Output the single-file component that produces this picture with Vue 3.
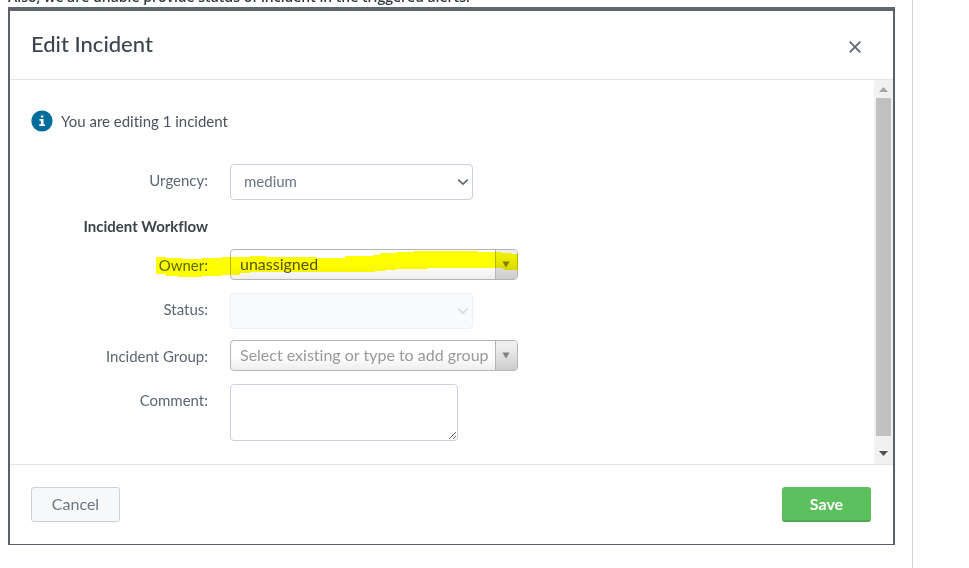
<script setup>
import { ref } from 'vue'

const urgency = ref('medium')
const owner = ref('unassigned')
const status = ref('')
const group = ref('')
const comment = ref('')
</script>

<template>
  <div class="page">
    <main class="post">
      <p class="post-text">Also, we are unable provide status of incident in the triggered alerts.</p>

      <section class="modal" role="dialog" aria-labelledby="modal-title">
        <header class="modal-header">
          <h1 id="modal-title">Edit Incident</h1>
          <button class="close" type="button" aria-label="Close">
            <svg width="12" height="12" viewBox="0 0 12 12">
              <path d="M0.7 0.7 L11.3 11.3 M11.3 0.7 L0.7 11.3" fill="none" stroke="#5c6773" stroke-width="1.8" />
            </svg>
          </button>
        </header>

        <div class="modal-body">
          <form class="content" @submit.prevent>
            <div class="notice">
              <svg width="22" height="22" viewBox="0 0 22 22" aria-hidden="true">
                <circle cx="11" cy="11" r="10.6" fill="#006d9c" />
                <path d="M9.9 5.4h2.5v2.2H9.9z M8.5 9h4v5.2h1.3v1.7H8.3v-1.7h1.6v-3.5H8.5z" fill="#fff" />
              </svg>
              <span>You are editing 1 incident</span>
            </div>

            <div class="row">
              <label for="urgency">Urgency:</label>
              <div class="select">
                <select id="urgency" v-model="urgency">
                  <option>medium</option>
                </select>
                <svg width="12" height="8" viewBox="0 0 12 8" aria-hidden="true">
                  <path d="M1.3 1.6 L6 6.1 L10.7 1.6" fill="none" stroke="#5c6773" stroke-width="1.6" />
                </svg>
              </div>
            </div>

            <div class="row heading">
              <h2>Incident Workflow</h2>
            </div>

            <div class="row">
              <label for="owner">Owner:</label>
              <div class="combo">
                <input id="owner" v-model="owner" type="text" />
                <button type="button" aria-label="Show owners">
                  <svg width="8" height="7" viewBox="0 0 8 7"><path d="M0.4 0.5h7.2L4 6.6z" fill="#808080" /></svg>
                </button>
              </div>
              <svg class="marker" width="362" height="28" viewBox="0 0 362 28" aria-hidden="true">
                <path
                  d="M0 7H10V8H26V9H46V8H66V7H94V6H110V7H160V8H189V6H217V5H224V3H240V2H258V1H322V2H346V3H356V4H362V20H348V19H346V18H272V19H240V20H229V21H219V22H94V23H84V25H66V26H46V27H22V26H10V24H0Z"
                  fill="#ffff00"
                />
              </svg>
            </div>

            <div class="row status">
              <label for="status">Status:</label>
              <div class="select disabled">
                <select id="status" v-model="status" disabled></select>
                <svg width="12" height="8" viewBox="0 0 12 8" aria-hidden="true">
                  <path d="M1.3 1.6 L6 6.1 L10.7 1.6" fill="none" stroke="#d5d9e2" stroke-width="1.6" />
                </svg>
              </div>
            </div>

            <div class="row group">
              <label for="group">Incident Group:</label>
              <div class="combo">
                <input id="group" v-model="group" type="text" placeholder="Select existing or type to add group" />
                <button type="button" aria-label="Show groups">
                  <svg width="8" height="7" viewBox="0 0 8 7"><path d="M0.4 0.5h7.2L4 6.6z" fill="#808080" /></svg>
                </button>
              </div>
            </div>

            <div class="row comment">
              <label for="comment">Comment:</label>
              <textarea id="comment" v-model="comment"></textarea>
            </div>
          </form>

          <div class="scrollbar" aria-hidden="true">
            <svg width="9" height="5" viewBox="0 0 9 5"><path d="M0 5L4.5 0L9 5z" fill="#a3a3a3" /></svg>
            <div class="thumb"></div>
            <svg width="9" height="5" viewBox="0 0 9 5"><path d="M0 0H9L4.5 5z" fill="#505050" /></svg>
          </div>
        </div>

        <footer class="modal-footer">
          <button class="cancel" type="button">Cancel</button>
          <button class="save" type="button">Save</button>
        </footer>
      </section>
    </main>
    <aside class="gutter"></aside>
  </div>
</template>

<style>
body {
  background: #fff;
  overflow: hidden;
}
</style>

<style scoped>
* {
  box-sizing: border-box;
}

.page {
  display: flex;
  min-height: 100vh;
  font-family: Lato, "Open Sans", sans-serif;
  font-size: 15px;
  line-height: 20px;
  font-variant-ligatures: none;
  color: #5c6773;
}

.post {
  flex: 1;
  min-width: 0;
  padding: 0 17px 0 8px;
}

.gutter {
  width: 57px;
  border-left: 1px solid #cfd4de;
}

.post-text {
  margin: -13px 0 0;
  font-family: "Open Sans", sans-serif;
  font-size: 14px;
  font-weight: 600;
  line-height: 20px;
  color: #33373e;
}

.modal {
  border: 2px solid #5a616b;
  border-top: 4px solid #5f6670;
  border-bottom: 1px solid #5a616b;
  background: #fff;
}

.modal-header {
  display: flex;
  align-items: center;
  justify-content: space-between;
  height: 69px;
  padding: 3px 32px 0 21px;
  border-bottom: 1px solid #e1e3e6;
}

h1 {
  margin: 0;
  padding-bottom: 5px;
  font-size: 22px;
  line-height: 24px;
  font-weight: 500;
  color: #3c444d;
}

h2 {
  margin: 0;
  font-size: 15px;
  line-height: 20px;
  font-weight: 700;
  color: #3c444d;
  text-align: right;
}

button {
  font: inherit;
  cursor: pointer;
}

.close {
  display: flex;
  padding: 0;
  border: 0;
  background: none;
}

.modal-body {
  display: flex;
}

.content {
  flex: 1;
  min-width: 0;
  padding: 30px 0 23px;
}

.notice {
  display: flex;
  align-items: center;
  gap: 8px;
  padding-left: 21px;
  margin-bottom: 32px;
  color: #4a535e;
}

.row {
  position: relative;
  display: grid;
  grid-template-columns: 198px 1fr;
  column-gap: 22px;
  align-items: start;
}

.row label {
  padding-top: 6px;
  text-align: right;
}

.heading {
  margin: 16px 0 13px;
}

.status {
  margin-top: 13px;
}

.group {
  margin-top: 11px;
}

.comment {
  margin-top: 13px;
}

.select {
  display: grid;
  width: 243px;
  align-items: center;
}

.select select,
.select svg {
  grid-area: 1 / 1;
}

.select svg {
  justify-self: end;
  margin-right: 4px;
  pointer-events: none;
}

.select select {
  appearance: none;
  width: 100%;
  height: 36px;
  padding: 0 24px 2px 13px;
  border: 1px solid #c9d0dc;
  border-radius: 4px;
  background: #fff;
  font: inherit;
  color: #6b7785;
}

.disabled select {
  border-color: #eef0f3;
  background: #f8fafc;
  opacity: 1;
}

.combo {
  display: flex;
  width: 288px;
  height: 31px;
  border: 1px solid #b5b5b5;
  border-radius: 4px;
  background: linear-gradient(#fff 50%, #eee);
  overflow: hidden;
}

.combo input {
  flex: 1;
  min-width: 0;
  padding: 0 0 1px 9px;
  border: 0;
  background: none;
  font: inherit;
  font-size: 16px;
  color: #555;
}

.combo input::placeholder {
  color: #999;
  opacity: 1;
}

.combo button {
  display: grid;
  place-items: center;
  width: 22px;
  padding: 0 2px 0 0;
  border: 0;
  border-left: 1px solid #b5b5b5;
  background: linear-gradient(#eee 20%, #ccc);
}

.marker {
  position: absolute;
  left: 146px;
  top: 1px;
  mix-blend-mode: multiply;
  pointer-events: none;
}

textarea {
  width: 228px;
  height: 57px;
  border: 1px solid #cccfdb;
  border-radius: 4px;
  background: #fff;
  font: inherit;
  color: #5c6773;
}

.scrollbar {
  display: flex;
  flex-direction: column;
  align-items: center;
  gap: 6px;
  width: 19px;
  padding: 7px 2px 8px;
  background: #f1f1f1;
}

.scrollbar svg {
  flex: none;
}

.thumb {
  flex: 1;
  width: 15px;
  margin-bottom: 9px;
  background: #c1c1c1;
}

.modal-footer {
  display: flex;
  justify-content: space-between;
  padding: 22px 22px 22px 21px;
  border-top: 1px solid #e1e5ea;
}

.modal-footer button {
  width: 89px;
  height: 35px;
  padding: 0 0 2px;
  border-radius: 3px;
  font-size: 16px;
}

.cancel {
  border: 1px solid #cdd2d8;
  background: #f7f8fa;
  color: #6b7785;
}

.modal-footer .save {
  padding-bottom: 0;
  border: 0;
  border-bottom: 2px solid #4fa851;
  background: #5cc05c;
  color: #fff;
  font-weight: 700;
}
</style>
